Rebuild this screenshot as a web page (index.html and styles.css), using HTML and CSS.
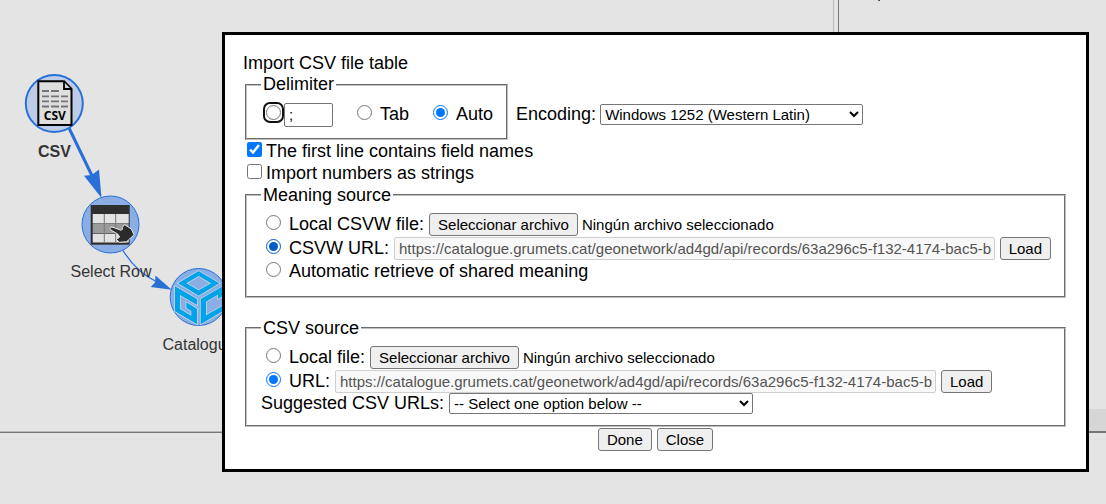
FILE: index.html
```html
<!DOCTYPE html>
<html lang="en">
<head>
<meta charset="utf-8">
<title>Import CSV file table</title>
<link rel="stylesheet" href="styles.css">
</head>
<body>
<main class="workspace">
  <section class="graph-pane" aria-label="Graph">
    <svg class="graph" width="320" height="400" viewBox="0 0 320 400">
      <g class="edges">
        <path d="M69 128 L95 182" stroke-width="3"/>
        <path class="arrow" d="M84 175.7 L91.7 175 L99 169.5 L101.5 198 Z"/>
        <path d="M122.7 250 Q136 272 157 282" stroke-width="1.3"/>
        <path class="arrow" d="M155.5 275.5 L171.7 289.7 L150.7 287 L155 282.5 Z"/>
      </g>
      <circle class="node node-source" cx="54.3" cy="103.5" r="28.5"/>
      <path d="M38.3 81.3 H64 L71.5 89 V125 H38.3 Z" fill="#dedede" stroke="#000" stroke-width="2"/>
      <path d="M64 82 V89 H71" fill="#d0d0d0" stroke="#000" stroke-width="1.8"/>
      <path d="M42 91h7m2 0h8M42 96.3h7m2 0h8m2 0h7M42 101.3h7m2 0h8m2 0h7M42 106.5h7m2 0h8m2 0h7" stroke="#747474" stroke-width="1.8"/>
      <text class="doc-text" x="54.8" y="120">CSV</text>
      <circle class="node" cx="110.5" cy="224.5" r="28.5"/>
      <rect x="90.7" y="205" width="39" height="39.7" fill="#2f2f2f"/>
      <path d="M92.7 214h36v9h-36z M92.7 234h36v8.5h-36z" fill="#e2e2e2"/>
      <path d="M92.7 223.2h36v10.3h-36z" fill="#9b9b9b"/>
      <path d="M104.3 214v28.5M115.7 214v28.5" stroke="#777"/>
      <g transform="translate(60 180) scale(.3333)">
        <path d="M150 145 Q152 139 159 142 L184 151 Q189 149 187 142 L194 134 L214 147 L222 164 L209 177 L200 185 L178 187 L169 178 L179 171 L173 162 L154 151 Z" fill="#2b2b2b" stroke="#e9e9e9" stroke-width="3" stroke-linejoin="round"/>
      </g>
      <circle class="node" cx="198.7" cy="297" r="28.5"/>
      <g class="cube" transform="translate(60 180) scale(.3333)">
        <path fill-rule="evenodd" d="M354 310 L416 273 L478 310 L416 347 Z M379 310 L416 331 L453 310 L416 288 Z"/>
        <path d="M345 319 L411 357 V375 L360 345 V387 L394 407 V393 L379 384 V367 L411 386 V433 L345 394 Z"/>
        <path d="M422 357 L488 319 V349 L474 357 V344 L438 365 V406 L488 377 V394 L422 433 Z"/>
      </g>
      <g class="node-labels">
        <text class="selected" x="54.5" y="157">CSV</text>
        <text x="111" y="277">Select Row</text>
        <text x="199" y="350">Catalogue</text>
      </g>
    </svg>
  </section>
  <section class="side-pane" aria-label="Details">
    <span class="side-mark"></span>
    <div class="side-scroll"></div>
  </section>
  <section class="bottom-pane" aria-label="Results"></section>
</main>

<form class="dialog" aria-labelledby="dialog-title">
  <div id="dialog-title">Import CSV file table</div>
  <div class="top-options">
    <fieldset class="group delimiter">
      <legend>Delimiter</legend>
      <div class="row">
        <span class="focus-ring"><input class="radio" type="radio" name="delimiter" id="delim-char" aria-label="Character"></span>
        <input class="field char" type="text" value=";" aria-label="Delimiter character">
        <input class="radio spaced" type="radio" name="delimiter" id="delim-tab">
        <label for="delim-tab">Tab</label>
        <input class="radio spaced" type="radio" name="delimiter" id="delim-auto" checked>
        <label for="delim-auto">Auto</label>
      </div>
    </fieldset>
    <div class="row encoding">
      <label for="encoding">Encoding:</label>
      <select class="select encoding-select" id="encoding"><option>Windows 1252 (Western Latin)</option></select>
    </div>
  </div>
  <div class="row check-row">
    <input class="check" type="checkbox" id="first-line" checked>
    <label for="first-line">The first line contains field names</label>
  </div>
  <div class="row check-row">
    <input class="check" type="checkbox" id="as-strings">
    <label for="as-strings">Import numbers as strings</label>
  </div>
  <fieldset class="group source">
    <legend>Meaning source</legend>
    <div class="row">
      <input class="radio" type="radio" name="meaning" id="meaning-local">
      <label for="meaning-local">Local CSVW file:</label>
      <span class="file"><span class="button">Seleccionar archivo</span><span class="file-name">Ningún archivo seleccionado</span><input class="file-input" type="file" aria-label="Local CSVW file"></span>
    </div>
    <div class="row">
      <input class="radio active" type="radio" name="meaning" id="meaning-url" checked>
      <label for="meaning-url">CSVW URL:</label>
      <input class="field url" type="text" disabled aria-label="CSVW URL" value="https://catalogue.grumets.cat/geonetwork/ad4gd/api/records/63a296c5-f132-4174-bac5-b">
      <button class="button" type="button">Load</button>
    </div>
    <div class="row">
      <input class="radio" type="radio" name="meaning" id="meaning-auto">
      <label for="meaning-auto">Automatic retrieve of shared meaning</label>
    </div>
  </fieldset>
  <fieldset class="group source csv-source">
    <legend>CSV source</legend>
    <div class="row">
      <input class="radio" type="radio" name="csv" id="csv-local">
      <label for="csv-local">Local file:</label>
      <span class="file"><span class="button">Seleccionar archivo</span><span class="file-name">Ningún archivo seleccionado</span><input class="file-input" type="file" aria-label="Local file"></span>
    </div>
    <div class="row url-row">
      <input class="radio" type="radio" name="csv" id="csv-url" checked>
      <label for="csv-url">URL:</label>
      <input class="field url" type="text" disabled aria-label="URL" value="https://catalogue.grumets.cat/geonetwork/ad4gd/api/records/63a296c5-f132-4174-bac5-b">
      <button class="button" type="button">Load</button>
    </div>
    <div class="suggested">
      <label for="suggested">Suggested CSV URLs:</label>
      <select class="select suggested-select" id="suggested"><option>-- Select one option below --</option></select>
    </div>
  </fieldset>
  <div class="actions">
    <button class="button" type="button">Done</button>
    <button class="button" type="button">Close</button>
  </div>
</form>
</body>
</html>
```
FILE: styles.css
```css
* { box-sizing: border-box; }

body {
  margin: 0;
  background: #e4e4e4;
  color: #000;
  font-family: "Liberation Sans", Arial, sans-serif;
  font-size: 18px;
  line-height: 21px;
}

/* Workspace behind the dialog */
.workspace {
  display: grid;
  grid-template-columns: minmax(0, 1fr) 268px;
  grid-template-rows: minmax(0, 1fr) 72px;
  column-gap: 4px;
  height: 100vh;
  overflow: hidden;
}

.graph-pane {
  overflow: hidden;
  border-right: 1px solid #b8b8b8;
  border-bottom: 1px solid #b8b8b8;
}

.graph { display: block; }

.side-pane {
  display: flex;
  flex-direction: column;
  justify-content: space-between;
  border-left: 1px solid #767676;
  border-bottom: 1px solid #767676;
}

.side-mark {
  width: 2px;
  height: 1px;
  margin-left: 39px;
  background: linear-gradient(90deg, #a04a00 50%, #005080 50%);
}

.side-scroll { height: 22px; background: #d6d6d6; }

.bottom-pane { grid-column: 1 / -1; border-top: 1px solid #767676; }

.edges { fill: none; stroke: #2870d8; }
.edges .arrow { fill: #2870d8; stroke: none; }
.node { fill: #8aaee4; stroke: #2870d8; stroke-width: 1; }
.node-source { fill: #bdcde8; stroke-width: 2; }
.cube { fill: #00a2e8; stroke: #cfdcef; stroke-width: 4; paint-order: stroke; }
.node-labels { font-size: 16px; fill: #343434; text-anchor: middle; }
.node-labels .selected { font-weight: bold; }
.doc-text {
  font-family: "Noto Sans", sans-serif;
  font-size: 12px;
  font-weight: bold;
  text-anchor: middle;
}

/* Dialog */
.dialog {
  position: absolute;
  top: 32px;
  left: 222px;
  right: 17px;
  padding: 18px;
  border: 3px solid #000;
  background: #fff;
}

.group {
  margin: 0 2px;
  padding: 7px 13px 11px 14px;
  border: 2px groove #c0c0c0;
}

.group legend { padding: 0 2px; }

label { white-space: nowrap; }

.row { display: flex; align-items: baseline; }

.top-options {
  display: flex;
  align-items: flex-end;
  gap: 6px;
  margin-bottom: 1px;
}

.encoding { gap: 4px; padding-bottom: 15px; }
.check-row { min-height: 22px; }
.source .row { min-height: 24px; }
.csv-source { margin-top: 20px; }
.csv-source .url-row { min-height: 23px; }

.radio, .check {
  flex: none;
  width: 15px;
  height: 15px;
  margin: 0 8px 0 5px;
}

.check { margin: 0 4px; }
.spaced { margin-left: 24px; }
.active { accent-color: #005cc8; }

.focus-ring {
  display: inline-flex;
  align-items: baseline;
  margin-left: 2px;
  padding: 1px;
  border: 2px solid #101010;
  border-radius: 7px;
}

.focus-ring .radio { margin: 0; }

.button, .field, .select {
  height: 23px;
  border: 1px solid #767676;
  border-radius: 3px;
  font-family: inherit;
  font-size: 15px;
  line-height: 21px;
  color: #000;
}

.button { padding: 0 8px; background: #efefef; }

.field { padding: 0 4px; border-radius: 2px; background: #fff; }
.char { width: 49px; height: 24px; }
.url {
  flex: 0 1 601px;
  min-width: 0;
  margin: 0 5px;
  padding-right: 2px;
  border-color: #cfcfcf;
  background: #f8f8f8;
  color: #545454;
}

.select { height: 21px; padding: 0; border-radius: 2px; background: #fff; }
.encoding-select { width: 263px; }
.suggested-select { width: 304px; }
.suggested { display: flex; gap: 5px; }

.file {
  position: relative;
  display: flex;
  align-items: baseline;
  gap: 4px;
  margin-left: 5px;
  font-size: 15px;
}

.file-input {
  position: absolute;
  inset: 0;
  width: 100%;
  opacity: 0;
}

.actions { display: flex; justify-content: center; gap: 5px; margin-top: 1px; }
```
